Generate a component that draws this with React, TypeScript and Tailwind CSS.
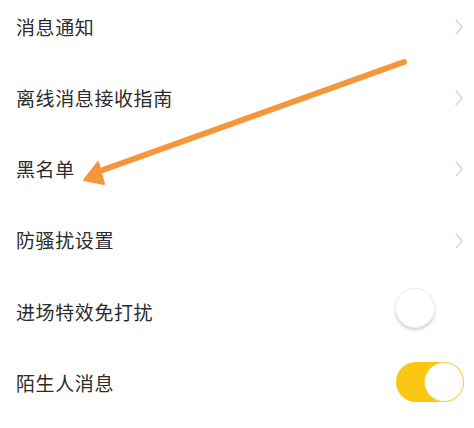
import React from "react";

const Chevron = () => (
  <svg width="10" height="18" viewBox="0 0 10 18" className="shrink-0">
    <path d="M2 2 L8 9 L2 16" fill="none" stroke="#d4d4d4" strokeWidth="1.3" strokeLinecap="round" strokeLinejoin="round" />
  </svg>
);

const rows: { label: string; kind: "chev" | "off" | "on" }[] = [
  { label: "消息通知", kind: "chev" },
  { label: "离线消息接收指南", kind: "chev" },
  { label: "黑名单", kind: "chev" },
  { label: "防骚扰设置", kind: "chev" },
  { label: "进场特效免打扰", kind: "off" },
  { label: "陌生人消息", kind: "on" },
];

export default function App() {
  return (
    <div
      className="relative w-[474px] h-[428px] overflow-hidden bg-white"
      style={{ fontFamily: '"Noto Sans CJK SC", "Noto Sans", sans-serif' }}
    >
      <div className="flex flex-col -mt-[8.5px]">
        {rows.map((r) => (
          <div key={r.label} className="h-[71.2px] flex items-center justify-between pl-4 pr-[10px]">
            <span className="text-[19px] tracking-[0.6px] text-[#2b2b2b]">{r.label}</span>
            {r.kind === "chev" && <Chevron />}
            {r.kind === "off" && (
              <div className="mr-[29px] -mt-[8px] w-[40px] h-[40px] rounded-full bg-white shadow-[0_2px_3px_rgba(0,0,0,0.18)] border border-[#eeeeee]" />
            )}
            {r.kind === "on" && (
              <div className="-mt-[2px] w-[68px] h-[40px] rounded-full bg-[#fbc712] flex items-center justify-end">
                <div className="w-[40px] h-[40px] rounded-full bg-white border border-[#f5d84a]" />
              </div>
            )}
          </div>
        ))}
      </div>
      <svg className="absolute left-0 top-0 pointer-events-none" width="474" height="428" viewBox="0 0 474 428">
        <line x1="404" y1="62" x2="100" y2="171" stroke="#f6963c" strokeWidth="6" strokeLinecap="round" />
        <polygon points="84,180 98,162 104,184" fill="#f6963c" stroke="#f6963c" strokeWidth="2" strokeLinejoin="round" />
      </svg>
    </div>
  );
}
